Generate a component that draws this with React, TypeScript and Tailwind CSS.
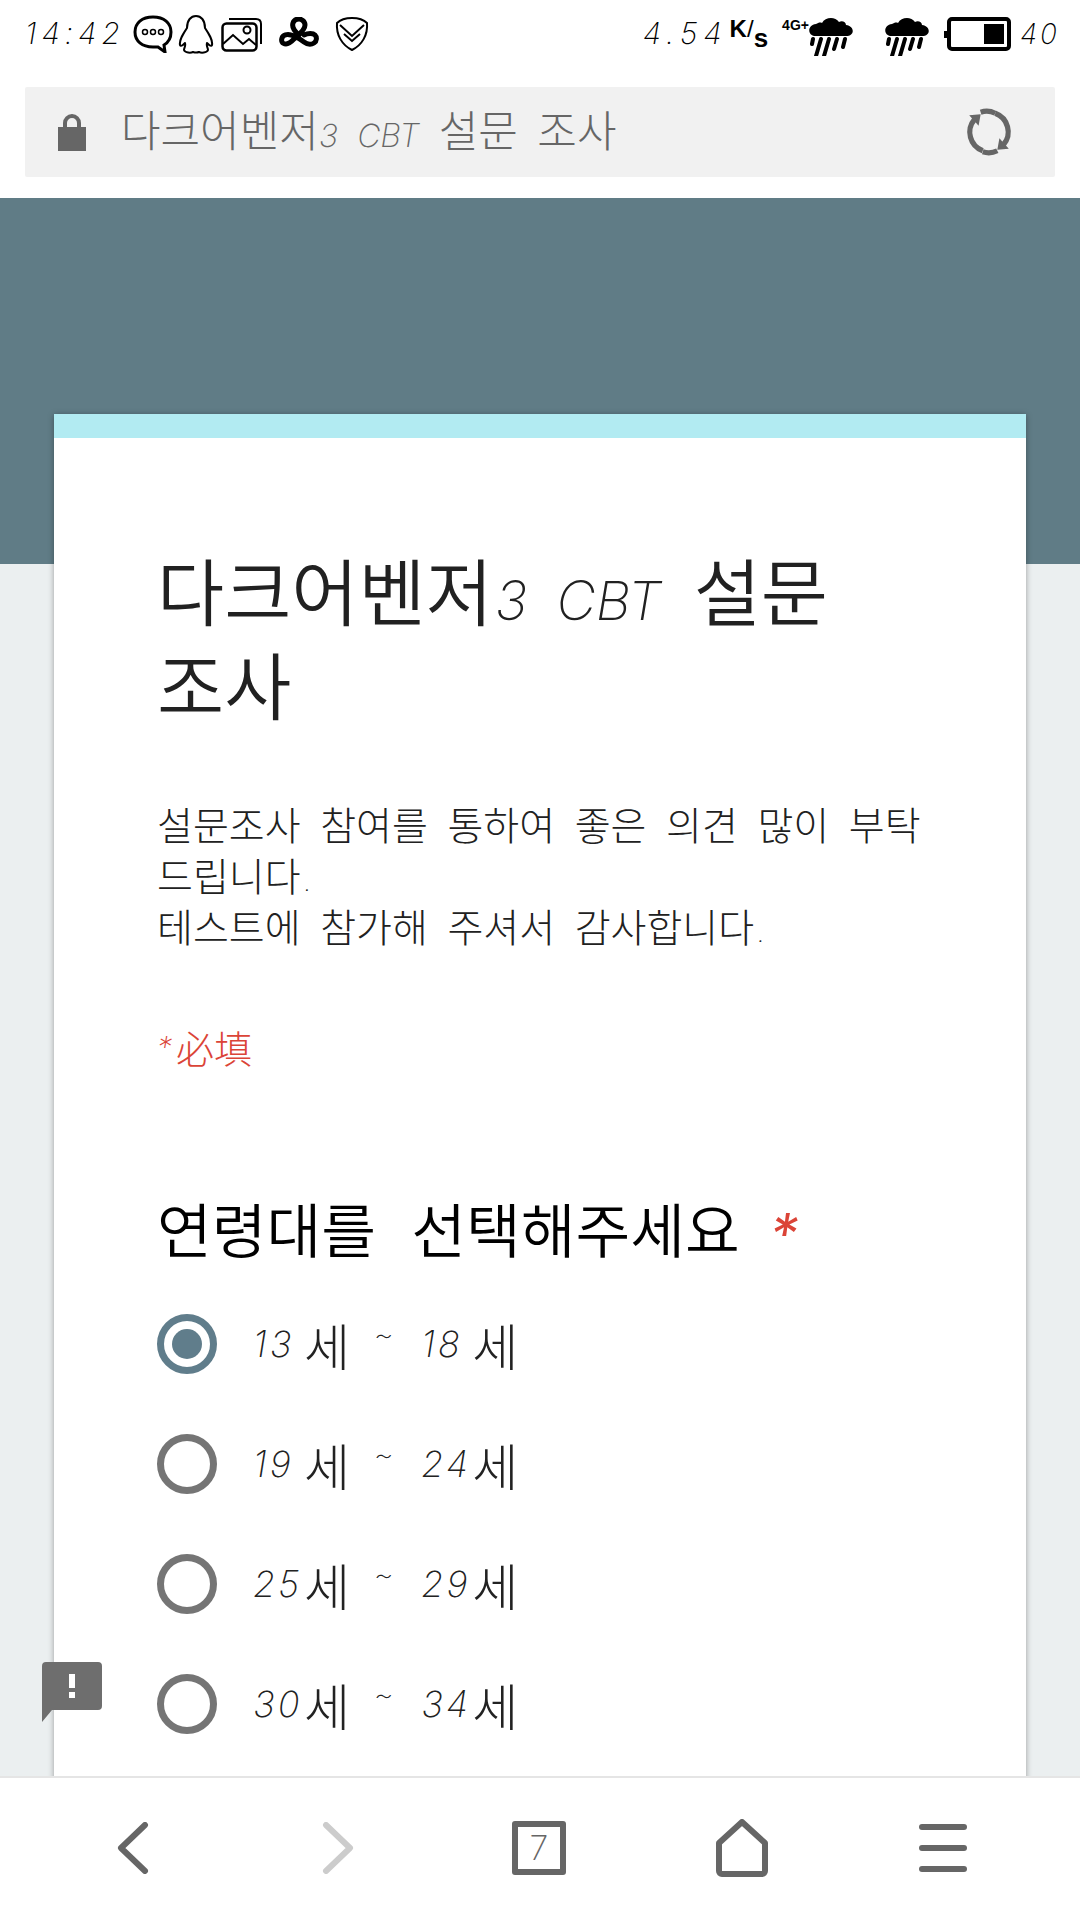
const kr = "font-['Noto_Sans_CJK_KR','Noto_Sans',sans-serif]";
const hand = "font-['Inter','Noto_Sans',sans-serif] font-extralight italic";

function RainCloud() {
    return (
        <svg viewBox="0 0 44 44" className="w-[44px] h-[44px]">
            <path d="M7 24c-9 0-9-11 0-12 2-1 4-2 6-1 3-6 13-7 17-1 3-2 7 0 7 3 9 1 9 11 0 11z" fill="#000" />
            <path d="M4 27l-1 5M12 27l-5 17M20 27l-5 17M28 27l-3 10M36 27l-2 8" stroke="#000" strokeWidth="4" strokeLinecap="round" fill="none" />
        </svg>
    );
}

function StatusBar() {
    return (
        <div className="h-[87px] bg-white flex items-center pl-[25px] pr-[20px] pb-[20px] shrink-0">
            <span className={`${hand} text-[30px] tracking-[5px] text-black w-[108px]`}>14:42</span>
            <div className="flex items-center">
                <svg viewBox="0 0 40 38" className="w-[40px] h-[38px]">
                    <path d="M20 2C9 2 2 8 2 17s7 15 18 15h5l7 5-1-7c5-3 7-8 7-13C38 8 31 2 20 2z" fill="none" stroke="#000" strokeWidth="3" />
                    <circle cx="12" cy="17" r="2.5" fill="none" stroke="#000" strokeWidth="1.5" />
                    <circle cx="20" cy="17" r="2.5" fill="none" stroke="#000" strokeWidth="1.5" />
                    <circle cx="28" cy="17" r="2.5" fill="none" stroke="#000" strokeWidth="1.5" />
                </svg>
                <svg viewBox="0 0 36 40" className="w-[36px] h-[40px] ml-[5px]">
                    <path d="M9 14C9 6 13 2 18 2s9 4 9 12c4 6 8 12 7 17-1 2-3 0-5-2-1 3 1 5 1 7-1 3-7 3-9 2-2 1-3 1-6 0-2 1-8 1-9-2 0-2 2-4 1-7-2 2-4 4-5 2-1-5 3-11 7-17z" fill="none" stroke="#000" strokeWidth="2" strokeLinejoin="round" />
                </svg>
                <svg viewBox="0 0 42 36" className="w-[42px] h-[36px] ml-[7px]">
                    <path d="M8 3h27c3 0 5 2 5 5v20" fill="none" stroke="#000" strokeWidth="2" />
                    <rect x="1.5" y="7.500" width="34" height="27" rx="4" fill="none" stroke="#000" strokeWidth="2.500" />
                    <circle cx="26" cy="14" r="3.500" fill="none" stroke="#000" strokeWidth="2" />
                    <path d="M2 28l10-9 10 9 6-5 7 6" fill="none" stroke="#000" strokeWidth="2" />
                </svg>
                <svg viewBox="0 0 40 34" className="w-[40px] h-[34px] ml-[16px]">
                    <path d="M20 18c-6-5-7-9-6-12 1-3 4-4 6-4s6 2 6 6-3 7-8 11c-4 4-7 8-11 8S2 24 3 21c1-3 5-4 9-3 5 1 9 4 13 7s7 3 10 1 3-6 1-8-7-2-11 0" fill="none" stroke="#000" strokeWidth="5" strokeLinecap="round" />
                </svg>
                <svg viewBox="0 0 34 36" className="w-[34px] h-[36px] ml-[16px]">
                    <path d="M17 2c6 0 11 1 15 5 1 12-5 22-15 27C7 29 1 19 2 7c4-4 9-5 15-5z" fill="none" stroke="#000" strokeWidth="2" />
                    <path d="M5 9l12 11L29 9M9 18l8 7 8-7" fill="none" stroke="#000" strokeWidth="2" />
                </svg>
            </div>
            <div className="flex items-center ml-auto">
                <span className={`${hand} text-[30px] tracking-[6px] text-black`}>4.54</span>
                <span className="font-['Liberation_Sans',sans-serif] font-bold text-[24px] text-black ml-[2px] leading-none flex">
                    <span className="mb-[8px]">K</span>
                    <span className="font-normal">/</span>
                    <span className="mt-[8px] text-[26px]">s</span>
                </span>
                <span className="font-['Liberation_Sans',sans-serif] font-bold text-[14px] text-black ml-[14px] mb-[18px] leading-none">4G+</span>
                <RainCloud />
                <div className="ml-[32px]"><RainCloud /></div>
                <div className="relative w-[64px] h-[34px] border-[4px] border-black rounded-[5px] ml-[18px] flex justify-end items-center pr-[3px]">
                    <div className="w-[20px] h-[20px] bg-black" />
                    <div className="absolute -left-[7px] top-[10px] w-[3px] h-[7px] bg-black" />
                </div>
                <span className={`${hand} text-[28px] tracking-[3px] text-black ml-[9px]`}>40</span>
            </div>
        </div>
    );
}

function UrlBar() {
    return (
        <div className="h-[111px] bg-white px-[25px] pb-[21px] shrink-0">
            <div className={`${kr} h-full bg-[#f1f1f1] rounded-[2px] flex items-center pl-[33px] pr-[41px] text-[#666] text-[43px] font-light [word-spacing:10px]`}>
                <svg viewBox="0 0 28 38" className="w-[28px] h-[38px] mr-[35px]">
                    <path d="M7 16V10a7 7 0 0 1 14 0v6" fill="none" stroke="#666" strokeWidth="4" />
                    <rect x="0" y="14" width="28" height="24" fill="#666" />
                </svg>
                <span className="leading-none mb-[6px]">
                    다크어벤저<span className={`${hand} text-[32px]`}>3 CBT</span> 설문 조사
                </span>
                <svg viewBox="0 0 48 48" className="w-[50px] h-[50px] ml-auto">
                    <path d="M10 12A19 19 0 0 0 18 42M38 36A19 19 0 0 0 30 6" fill="none" stroke="#666" strokeWidth="5" />
                    <path d="M5 8l11-1-2 11zM43 40l-11 1 2-11z" fill="#666" />
                    <path d="M16 5a19 19 0 0 1 14 1M18 43a19 19 0 0 0 14-1" fill="none" stroke="#666" strokeWidth="5" />
                </svg>
            </div>
        </div>
    );
}

function Radio({ label, from, to, checked }: { label: string; from: string; to: string; checked?: boolean }) {
    return (
        <div className="h-[120px] flex items-center" aria-label={label}>
            <div className={`w-[60px] h-[60px] rounded-full border-[7px] flex items-center justify-center ${checked ? "border-[#607d8b]" : "border-[#757575]"}`}>
                {checked && <div className="w-[30px] h-[30px] rounded-full bg-[#607d8b]" />}
            </div>
            <span className={`${kr} ml-[36px] text-[50px] font-light text-[#222] flex items-center`}>
                <span className={`${hand} text-[36px] tracking-[3px] w-[51px]`}>{from}</span>세
                <span className={`${hand} text-[30px] ml-[24px] mb-[20px]`}>~</span>
                <span className={`${hand} text-[36px] tracking-[3px] ml-[28px] w-[51px]`}>{to}</span>세
            </span>
        </div>
    );
}

function Survey() {
    return (
        <div className="relative flex-1 bg-[#ebeff0] overflow-hidden">
            <div className="h-[366px] bg-[#607c86]" />
            <div className={`${kr} -mt-[150px] mx-[54px] bg-white shadow-[0_1px_6px_rgba(0,0,0,0.35)]`}>
                <div className="h-[24px] bg-[#b2ebf2]" />
                <div className="pl-[103px] pr-[90px] pt-[103px] pb-[120px]">
                    <h1 className="text-[73px] leading-[94px] font-[350] text-[#212121] [word-spacing:16px] break-keep">
                        다크어벤저<span className={`${hand} text-[54px] leading-none [word-spacing:14px] ml-[2px]`}>3 CBT</span> 설문 조사
                    </h1>
                    <p className="mt-[69px] text-[39px] leading-[51px] font-light text-[#212121] [word-spacing:11px] break-keep">
                        설문조사 참여를 통하여 좋은 의견 많이 부탁 드립니다<span className={`${hand} text-[24px] leading-none ml-[4px]`}>.</span>
                        <br />
                        테스트에 참가해 주셔서 감사합니다<span className={`${hand} text-[24px] leading-none ml-[4px]`}>.</span>
                    </p>
                    <p className={`${hand} mt-[76px] h-[40px] text-[30px] leading-[40px] text-[#db4437] flex items-center`}>
                        *<span className={`${kr} not-italic font-light text-[38px] leading-[40px] ml-[4px]`}>必填</span>
                    </p>
                    <h2 className="mt-[122px] h-[76px] text-[59.5px] leading-[76px] font-[350] text-black [word-spacing:22px] flex items-center">
                        연령대를 선택해주세요
                        <span className={`${hand} font-normal text-[56px] leading-[76px] text-[#db4437] ml-[30px] mt-[14px]`}>*</span>
                    </h2>
                    <div className="mt-[19px]">
                        <Radio label="13세 ~ 18세" from="13" to="18" checked />
                        <Radio label="19세 ~ 24세" from="19" to="24" />
                        <Radio label="25세 ~ 29세" from="25" to="29" />
                        <Radio label="30세 ~ 34세" from="30" to="34" />
                    </div>
                </div>
            </div>

            {/* feedback button sits over the page */}
            <svg viewBox="0 0 60 60" className="absolute left-[42px] top-[1464px] w-[60px] h-[60px]">
                <path d="M4 0h52a4 4 0 0 1 4 4v40a4 4 0 0 1-4 4H10L0 60V4a4 4 0 0 1 4-4z" fill="#6e6e6e" />
                <rect x="27" y="12" width="6" height="14" fill="#fff" />
                <rect x="27" y="30" width="6" height="6" fill="#fff" />
            </svg>
        </div>
    );
}

function BottomNav() {
    return (
        <div className="h-[144px] bg-white border-t-2 border-[#e5e5e5] flex items-center shrink-0 pb-[2px]">
            <div className="w-[266px] flex justify-center">
                <svg viewBox="0 0 32 52" className="w-[32px] h-[52px]">
                    <path d="M28 3L4 26l24 23" fill="none" stroke="#666" strokeWidth="6" strokeLinecap="round" strokeLinejoin="round" />
                </svg>
            </div>
            <div className="w-[144px] flex justify-center">
                <svg viewBox="0 0 32 52" className="w-[32px] h-[52px]">
                    <path d="M4 3l24 23L4 49" fill="none" stroke="#ccc" strokeWidth="6" strokeLinecap="round" strokeLinejoin="round" />
                </svg>
            </div>
            <div className="w-[258px] flex justify-center">
                <div className="w-[54px] h-[54px] border-[6px] border-[#666] rounded-[3px] flex items-center justify-center">
                    <span className="font-['Inter',sans-serif] font-extralight text-[34px] leading-none text-[#666]">7</span>
                </div>
            </div>
            <div className="w-[148px] flex justify-center">
                <svg viewBox="0 0 52 58" className="w-[52px] h-[58px]">
                    <path d="M26 3L3 24v28a3 3 0 0 0 3 3h40a3 3 0 0 0 3-3V24z" fill="none" stroke="#666" strokeWidth="6" strokeLinejoin="round" />
                </svg>
            </div>
            <div className="w-[254px] flex justify-center">
                <div className="w-[48px] flex flex-col gap-[15px]">
                    <div className="h-[6px] rounded-full bg-[#666]" />
                    <div className="h-[6px] rounded-full bg-[#666]" />
                    <div className="h-[6px] rounded-full bg-[#666]" />
                </div>
            </div>
        </div>
    );
}

export default function App() {
    return (
        <div className="w-[1080px] h-[1920px] flex flex-col overflow-hidden bg-white">
            <StatusBar />
            <UrlBar />
            <Survey />
            <BottomNav />
        </div>
    );
}
